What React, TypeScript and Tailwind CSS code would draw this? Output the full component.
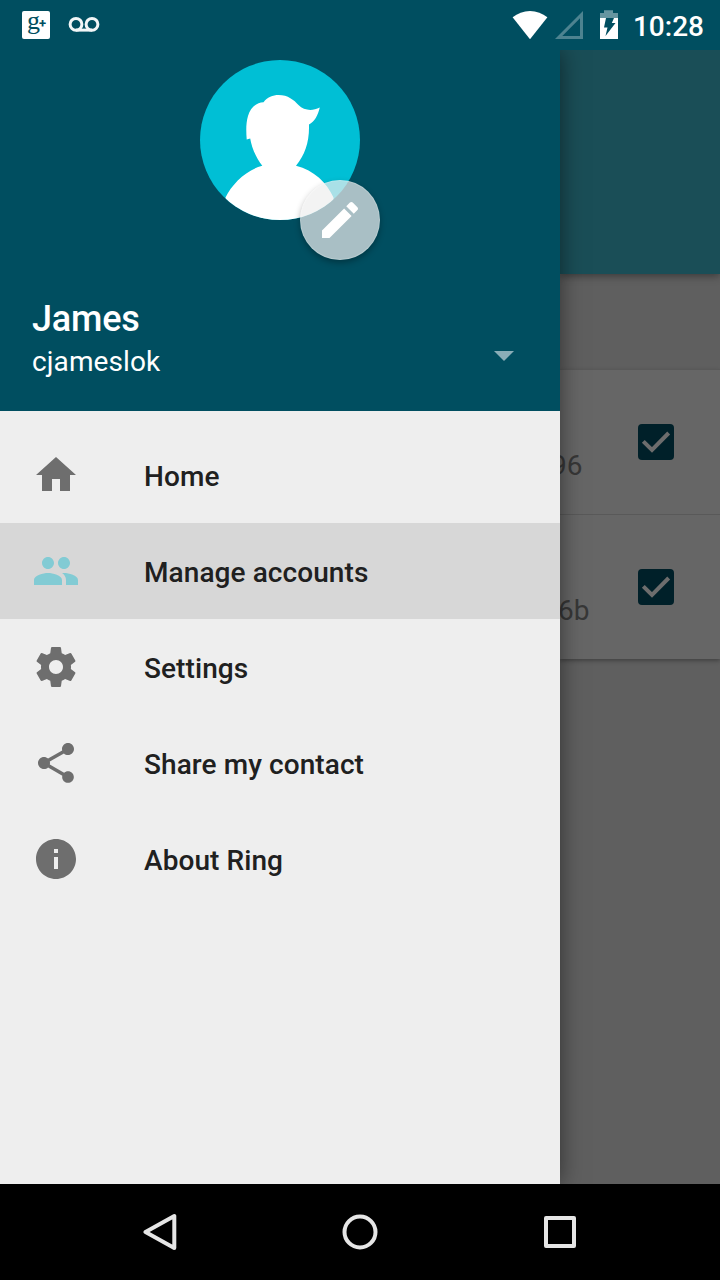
import React from "react";

const menu = [
  { label: "Home", d: "M10 20v-6h4v6h5v-8h3L12 3 2 12h3v8z" },
  {
    label: "Manage accounts",
    active: true,
    d: "M16 11c1.66 0 2.99-1.34 2.99-3S17.66 5 16 5c-1.66 0-3 1.34-3 3s1.34 3 3 3zm-8 0c1.66 0 2.99-1.34 2.99-3S9.66 5 8 5C6.34 5 5 6.34 5 8s1.34 3 3 3zm0 2c-2.33 0-7 1.17-7 3.500V19h14v-2.500c0-2.330-4.670-3.500-7-3.500zm8 0c-.29 0-.62.02-.97.05 1.160.84 1.970 1.970 1.970 3.450V19h6v-2.500c0-2.330-4.670-3.500-7-3.500z",
  },
  {
    label: "Settings",
    d: "M19.43 12.98c.04-.32.07-.64.07-.98s-.03-.66-.07-.98l2.110-1.650c.19-.15.24-.42.12-.64l-2-3.460c-.12-.22-.39-.3-.61-.22l-2.490 1c-.52-.4-1.080-.73-1.690-.98l-.38-2.650C14.460 2.180 14.250 2 14 2h-4c-.25 0-.46.18-.49.42l-.38 2.650c-.61.25-1.170.59-1.690.98l-2.490-1c-.23-.09-.49 0-.61.22l-2 3.460c-.13.22-.07.49.12.64l2.110 1.650c-.04.32-.07.65-.07.98s.03.66.07.98l-2.110 1.650c-.19.15-.24.42-.12.64l2 3.460c.12.22.39.3.61.22l2.490-1c.52.4 1.080.73 1.690.98l.38 2.650c.03.24.24.42.49.42h4c.25 0 .46-.18.49-.42l.38-2.650c.61-.25 1.170-.59 1.690-.98l2.490 1c.23.09.49 0 .61-.22l2-3.460c.12-.22.07-.49-.12-.64l-2.110-1.650zM12 15.500c-1.930 0-3.500-1.570-3.500-3.500s1.570-3.500 3.500-3.500 3.500 1.570 3.500 3.500-1.570 3.500-3.500 3.500z",
  },
  {
    label: "Share my contact",
    d: "M18 16.080c-.76 0-1.440.3-1.960.77L8.910 12.700c.05-.23.09-.46.09-.7s-.04-.47-.09-.7l7.050-4.110c.54.5 1.250.81 2.040.81 1.660 0 3-1.340 3-3s-1.340-3-3-3-3 1.340-3 3c0 .24.04.47.09.7L8.040 9.810C7.500 9.310 6.790 9 6 9c-1.660 0-3 1.340-3 3s1.340 3 3 3c.79 0 1.500-.31 2.040-.81l7.120 4.160c-.05.21-.08.43-.08.65 0 1.610 1.310 2.920 2.920 2.920s2.920-1.310 2.920-2.920-1.310-2.920-2.920-2.920z",
  },
  {
    label: "About Ring",
    d: "M12 2C6.480 2 2 6.480 2 12s4.480 10 10 10 10-4.480 10-10S17.520 2 12 2zm1 15h-2v-6h2v6zm0-8h-2V7h2v2z",
  },
];

function StatusBar() {
  return (
    <header className="flex h-[50px] shrink-0 items-start bg-[#004e60] pl-[22px] pr-4">
      <div className="mt-[11px] flex h-7 w-7 items-start rounded-[2px] bg-white pl-[5px] text-[#004e60]">
        <span className="mt-[2px] font-['Liberation_Serif',serif] text-[26px] leading-[16px]">g</span>
        <span className="mt-[5px] -ml-[1px] font-['Roboto',sans-serif] text-[13px] font-bold leading-[16px]">+</span>
      </div>
      <svg className="ml-[18px] mt-[16px]" width="32" height="18" viewBox="0 0 32 18" fill="none" stroke="#f2f6f7" strokeWidth="3">
        <circle cx="8" cy="8.300" r="5.900" />
        <circle cx="24" cy="8.300" r="5.900" />
        <path d="M8 14.100h16" />
      </svg>
      <div className="ml-auto flex items-start">
        <svg className="mt-[10px]" width="36" height="30" viewBox="0 0 36 30" fill="#fff">
          <path d="M18 29.300.600 7.300C5.500 3.300 11.500 1 18 1s12.500 2.300 17.400 6.300z" />
        </svg>
        <svg className="ml-[7px] mt-[10px]" width="29" height="30" viewBox="0 0 29 30" fill="#4d8390" fillRule="evenodd">
          <path d="M28 1v28H0zM25 8.200 7.300 26H25z" />
        </svg>
        <svg className="ml-[15px] mt-[10px]" width="20" height="30" viewBox="0 0 20 30">
          <path d="M1 3h4V.3h9V3h5v5H1z" fill="#6695a0" />
          <path d="M1 8h18v21H1z" fill="#fff" />
          <path d="M7 8h8l-2.200 5H16.500L6.500 26l2-8.500H5z" fill="#004e60" />
        </svg>
        <span className="ml-[14px] mt-[11px] text-[28px] font-medium leading-8 text-white">10:28</span>
      </div>
    </header>
  );
}

function Account({ id, offset }: { id: string; offset: string }) {
  return (
    <div className="flex h-[145px] border-t border-[#595959] bg-[#666]">
      <span className={`${offset} mt-[80px] w-[87px] shrink-0 text-[28px] leading-8 text-[#373737]`}>{id}</span>
      <svg className="mt-[54px] shrink-0" width="36" height="36" viewBox="0 0 36 36">
        <rect width="36" height="36" rx="4" fill="#002029" />
        <path d="m5.300 17.300 8.700 8.700L30.700 9" fill="none" stroke="#6d6d6d" strokeWidth="4" />
      </svg>
    </div>
  );
}

export default function App() {
  return (
    <div className="flex h-[1280px] w-[720px] flex-col overflow-hidden bg-black font-['Roboto',sans-serif]">
      <StatusBar />
      <main className="flex h-[1134px] shrink-0 overflow-hidden">
        <aside className="relative z-10 flex w-[560px] shrink-0 flex-col bg-[#eee] shadow-[0_0_22px_rgba(0,0,0,0.5)]">
          <section className="flex h-[361px] flex-col bg-[#004e60] px-8 pt-[10px] text-white">
            <div className="relative h-[160px] w-[160px] self-center">
              <svg width="160" height="160" viewBox="0 0 160 160">
                <defs>
                  <clipPath id="portrait">
                    <circle cx="80" cy="80" r="80" />
                  </clipPath>
                </defs>
                <g clipPath="url(#portrait)">
                  <path d="M0 0h160v160H0z" fill="#00bfd5" />
                  <path
                    fill="#fff"
                    d="M25.500 137.500C32 124 46 110 62.300 105.700C56 98 51.500 87 50.200 78.500L46.700 79.600C46 70 46 63 48 56C50.500 47 57 42.500 63.500 42.300C67 37 73 35 78.500 35C88 35 94 40 98.500 45C104 50.500 112 51.500 119.800 47.500C118 55 114.500 62 109 64.500C109.500 82 105 95 96 105.700C114 110 127 123 133.500 137.500L134 160H25z"
                  />
                </g>
              </svg>
              <div className="absolute left-[100px] top-[120px] flex h-20 w-20 items-center justify-center rounded-full border border-white/20 bg-[rgba(238,238,238,0.71)] shadow-[0_3px_6px_rgba(0,0,0,0.3)]">
                <svg className="shrink-0" width="48" height="48" viewBox="0 0 24 24" fill="#fff">
                  <path d="M3 17.250V21h3.750L17.810 9.940l-3.750-3.750L3 17.250zM20.710 7.040c.39-.39.39-1.020 0-1.410l-2.340-2.340c-.39-.39-1.020-.39-1.410 0l-1.830 1.830 3.750 3.750 1.830-1.830z" />
                </svg>
              </div>
            </div>
            <h1 className="mt-[78px] text-[36px] font-medium leading-[42px] tracking-[-0.2px]">James</h1>
            <div className="flex items-start justify-between pr-[14px]">
              <span className="mt-[6px] text-[28px] leading-8 tracking-[0.1px]">cjameslok</span>
              <svg className="mt-[11px]" width="20" height="10" viewBox="0 0 20 10" fill="#8aadb7">
                <path d="M0 0h20L10 10z" />
              </svg>
            </div>
          </section>
          <nav className="pt-4">
            {menu.map((item) => (
              <div key={item.label} className={`flex h-24 items-center pl-8 ${item.active ? "bg-[#d7d7d7]" : ""}`}>
                <svg width="48" height="48" viewBox="0 0 24 24" fill={item.active ? "#82cbd4" : "#6e6e6e"}>
                  <path d={item.d} />
                </svg>
                <span className="ml-16 pt-[4px] text-[28px] font-medium leading-8 tracking-[0.08px] text-[#202020]">{item.label}</span>
              </div>
            ))}
          </nav>
        </aside>
        <section className="flex w-[160px] shrink-0 flex-col bg-[#5f5f5f]">
          <div className="relative h-[224px] shrink-0 bg-[#1a4e57] shadow-[0_2px_8px_rgba(0,0,0,0.4)]" />
          <div className="h-[95px] shrink-0" />
          <div className="shadow-[0_2px_4px_rgba(0,0,0,0.3)]">
            <Account id="96" offset="-ml-[9px]" />
            <Account id="6b" offset="-ml-[2px] mr-[-7px]" />
          </div>
        </section>
      </main>
      <footer className="flex h-24 shrink-0 items-center justify-center bg-black">
        <svg width="434" height="40" viewBox="0 0 434 40" fill="none" stroke="#e6e6e6" strokeWidth="4" strokeLinejoin="round">
          <path d="M31.300 4v32L2.500 20z" />
          <circle cx="217" cy="20" r="15.500" />
          <path d="M403 6h28v28h-28z" />
        </svg>
      </footer>
    </div>
  );
}
